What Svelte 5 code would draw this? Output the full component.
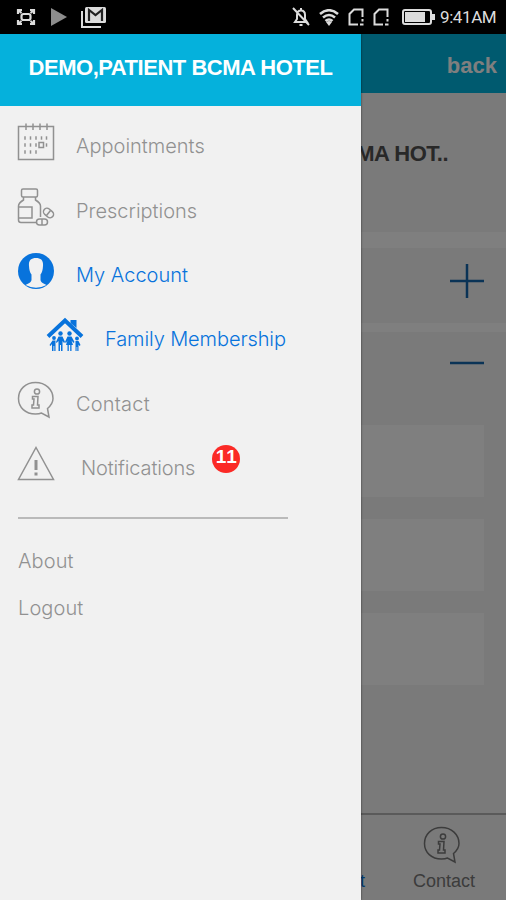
<script lang="ts">
  const patient = "DEMO,PATIENT BCMA HOTEL";
  const unread = 11;

  const items = [
    { id: "appointments", label: "Appointments" },
    { id: "prescriptions", label: "Prescriptions" },
    { id: "account", label: "My Account", active: true },
    { id: "family", label: "Family Membership", active: true, child: true },
    { id: "contact", label: "Contact" },
    { id: "notifications", label: "Notifications", count: unread },
  ];

  const calendarDots = [
    [8, 15], [13.5, 15], [19, 15], [24.5, 15], [29.5, 15],
    [8, 22], [13.5, 22], [19, 22], [29.5, 22],
    [8, 29], [13.5, 29], [19, 29],
  ];
</script>

{#snippet bubble()}
  <path d="M30.5 27.5C34 24.5 36 21 36 17.5C36 8.5 28.5 1.5 18.500 1.500S1.500 8.500 1.500 17.500S8.500 33 18.500 33C21 33 23 32.700 24.500 32L32 36Z" />
  <circle cx="20" cy="10.500" r="2.600" />
  <path d="M15.500 15.500H21L20.500 24H22V27H15V24H16.500L17 18H15.500Z" />
{/snippet}

{#snippet sim()}
  <path d="M10 16.500H1.500V6L6 1.500H14.500V9M14.500 11V13.500M12 16.500H15.500" />
{/snippet}

<div class="phone">
  <div class="status">
    <svg class="capture" viewBox="0 0 20 18">
      <path d="M2 6V2H6M14 2H18V6M18 12V16H14M6 16H2V12M2 2L5.500 5M18 2L14.500 5M18 16L14.500 13M2 16L5.500 13" />
      <rect x="5.500" y="6" width="9" height="6" rx="2" />
    </svg>
    <svg class="play" viewBox="0 0 16 18">
      <path d="M0 0L16 9L0 18Z" />
    </svg>
    <svg class="mail" viewBox="0 0 26 22">
      <path class="back-card" d="M1 5V21H20" />
      <rect x="4" y="1" width="21" height="16" rx="1.500" />
      <path class="letter" d="M8 15V4L14.500 9L21 4V15" />
    </svg>
    <span class="spacer"></span>
    <svg class="bell" viewBox="0 0 18 20">
      <path d="M3 15H15L13 12V8C13 5 11.500 3.500 9 3.500S5 5 5 8V12ZM9 1V3M7.500 18H10.500M1 1L17 18" />
    </svg>
    <svg class="wifi" viewBox="0 0 20 17">
      <path d="M1 5Q10 -2.500 19 5M4 8.500Q10 3.500 16 8.500M6.500 12Q10 9 13.500 12" />
      <path class="tip" d="M7 13Q10 11 13 13L10 17Z" />
    </svg>
    <svg class="sim" viewBox="0 0 16 18">{@render sim()}</svg>
    <svg class="sim second" viewBox="0 0 16 18">{@render sim()}</svg>
    <svg class="battery" viewBox="0 0 34 16">
      <rect class="shell" x="1" y="1" width="28" height="14" rx="2" />
      <rect x="3" y="3" width="20" height="10" />
      <path d="M30 5H33V11H30Z" />
    </svg>
    <span class="clock">9:41AM</span>
  </div>

  <div class="screen">
    <div class="page">
      <header class="topbar">back</header>
      <section class="name">BCMA HOT..</section>
      <section class="row">
        <svg viewBox="0 0 34 34"><path d="M0 17H34M17 0V34" /></svg>
      </section>
      <section class="details">
        <svg viewBox="0 0 34 34"><path d="M0 15H34" /></svg>
        <div class="field"></div>
        <div class="field"></div>
        <div class="field"></div>
      </section>
      <nav class="tabs">
        <div class="tab active">Account</div>
        <div class="tab">
          <svg viewBox="0 0 38 38">{@render bubble()}</svg>
          Contact
        </div>
      </nav>
    </div>

    <div class="shade"></div>

    <aside class="drawer">
      <h1>{patient}</h1>
      <ul>
        {#each items as item (item.id)}
          <li class={item.id} class:active={item.active} class:child={item.child}>
            <svg viewBox="0 0 38 38">
              {#if item.id === "appointments"}
                <path d="M1.500 3.500H36.500V36.500H1.500ZM9 .5V7M16 .5V7M23 .5V7M30 .5V7" />
                {#each calendarDots as [x, y]}
                  <path class="dot" d="M{x} {y - 1.700}V{y + 1.700}" />
                {/each}
                <rect x="22" y="19.500" width="4.500" height="5" />
              {:else if item.id === "prescriptions"}
                <rect x="4.500" y="1" width="16" height="8" rx="1.500" />
                <path d="M6.500 9V12Q1.500 15 1.500 18V32Q1.500 34.500 4 34.500H19M18.500 9V12Q23.500 15 23.500 18V29M1.500 19H15V30H1.500" />
                <rect x="19.500" y="31" width="11" height="6" rx="3" />
                <path d="M25 31V37" />
                <rect x="26" y="21.500" width="11" height="7" rx="3.500" transform="rotate(40 31.500 25)" />
                <path d="M33.500 22.500L29.500 27.500" />
              {:else if item.id === "account"}
                <circle class="solid" cx="19" cy="19" r="18" />
                <path class="cut" d="M19 6C14 6 11.500 8.500 12 14C12.200 18 13 20.500 14.500 22.500V28C14 31 11 31.500 8.500 33Q19 38.500 29.500 33C27 31.500 24 31 23.500 28V22.500C25 20.500 25.800 18 26 14C26.500 8.500 24 6 19 6Z" />
              {:else if item.id === "family"}
                <path class="roof" d="M2 20.500L19 4.500L36 20.500" />
                <path class="solid" d="M24.500 4H30.500V12L24.500 7Z" />
                <circle class="solid" cx="14.500" cy="17.500" r="2.200" />
                <circle class="solid" cx="23.500" cy="17.500" r="2.200" />
                <circle class="solid" cx="8" cy="22" r="1.900" />
                <circle class="solid" cx="31" cy="22.500" r="1.900" />
                <path class="solid" d="M12.500 20.500H16.500L19 26L18 27L16.500 25V35H15V29H14V35H12.500V25L10.500 27L10 26Z" />
                <path class="solid" d="M21.500 20.500H25.500L28.500 26L27.500 27L25.500 24.500L27 29H25.500V35H24.200V29H22.800V35H21.500V29H20L21.500 24.500L20 27L19 26Z" />
                <path class="solid" d="M6.500 24.500H9.500V35H8.300V30H7.500V35H6V28L4.500 30L3.500 29Z" />
                <path class="solid" d="M29.500 25H32.500L34.500 29L33.500 30L32.500 28.500V35H31.300V31H30.600V35H29.500Z" />
              {:else if item.id === "contact"}
                {@render bubble()}
              {:else}
                <path d="M19 2.500L36.500 34.500H1.500Z" />
                <path class="mark" d="M19 15V25M19 27.500V30.500" />
              {/if}
            </svg>
            <span class="label">{item.label}</span>
            {#if item.count}
              <span class="badge">{item.count}</span>
            {/if}
          </li>
        {/each}
      </ul>
      <hr />
      <div class="links">
        <a href="#about">About</a>
        <a href="#logout">Logout</a>
      </div>
    </aside>
  </div>
</div>

<style>
  :global(body) {
    background: #000;
  }

  .phone {
    --blue: #0873dc;
    --cyan: #05b1dc;

    width: 506px;
    height: 900px;
    display: flex;
    flex-direction: column;
    overflow: hidden;
    font-family: "Liberation Sans", Arial, sans-serif;
  }

  svg {
    display: block;
    flex: none;
    fill: none;
    stroke: currentColor;
  }

  .status {
    height: 34px;
    box-sizing: border-box;
    flex: none;
    display: flex;
    align-items: center;
    padding: 0 8px 0 16px;
    background: #000;
    color: #dcdcdc;
  }

  .capture {
    width: 20px;
    height: 18px;
    stroke-width: 2.2;
  }

  .play {
    width: 16px;
    height: 18px;
    margin-left: 15px;
    fill: #8d8d8d;
    stroke: none;
  }

  .mail {
    width: 26px;
    height: 22px;
    margin-left: 14px;
    fill: currentColor;
    stroke: none;
  }

  .mail .back-card {
    fill: none;
    stroke: currentColor;
    stroke-width: 2;
  }

  .mail .letter {
    fill: none;
    stroke: #222;
    stroke-width: 2.2;
  }

  .spacer {
    flex: 1;
  }

  .bell {
    width: 18px;
    height: 20px;
    stroke-width: 2;
  }

  .wifi {
    width: 20px;
    height: 17px;
    margin-left: 9px;
    stroke-width: 2.6;
  }

  .wifi .tip,
  .battery {
    fill: currentColor;
    stroke: none;
  }

  .sim {
    width: 16px;
    height: 18px;
    margin-left: 9px;
    stroke-width: 2;
  }

  .sim.second {
    margin-left: 9px;
  }

  .battery {
    width: 34px;
    height: 16px;
    margin-left: 13px;
  }

  .battery .shell {
    fill: none;
    stroke: currentColor;
    stroke-width: 2;
  }

  .clock {
    width: 58px;
    margin-left: 4px;
    font: 17px/36px Roboto, sans-serif;
    letter-spacing: -0.4px;
    white-space: nowrap;
  }

  .screen {
    position: relative;
    flex: 1;
    min-height: 0;
  }

  .page {
    height: 100%;
    display: flex;
    flex-direction: column;
    background: #fff;
  }

  .topbar {
    height: 59px;
    box-sizing: border-box;
    padding-right: 9px;
    background: #00b4de;
    color: #fff;
    font-size: 22px;
    font-weight: 700;
    line-height: 64px;
    text-align: right;
  }

  .name {
    height: 139px;
    box-sizing: border-box;
    padding: 0 58px 18px 0;
    background: #f4f4f4;
    color: #505050;
    font-size: 22px;
    font-weight: 700;
    letter-spacing: -0.5px;
    line-height: 121px;
    text-align: right;
    white-space: nowrap;
  }

  .row,
  .details {
    display: flex;
    flex-direction: column;
    align-items: flex-end;
    padding-right: 22px;
    background: #f4f4f4;
    color: #1566ac;
  }

  .row {
    height: 75px;
    margin-top: 16px;
    justify-content: center;
  }

  .row svg,
  .details svg {
    width: 34px;
    height: 34px;
    stroke-width: 2.5;
  }

  .row svg {
    margin-bottom: 10px;
  }

  .details {
    flex: 1;
    margin-top: 9px;
    padding-top: 16px;
    gap: 22px;
  }

  .details svg {
    margin-bottom: 21px;
  }

  .field {
    width: 440px;
    height: 72px;
    background: #fff;
  }

  .tabs {
    height: 87px;
    box-sizing: border-box;
    flex: none;
    display: flex;
    justify-content: flex-end;
    border-top: 2px solid #b4b4b4;
    background: #f4f4f4;
    font-size: 18px;
  }

  .tab {
    width: 124px;
    display: flex;
    flex-direction: column;
    align-items: center;
    justify-content: flex-end;
    gap: 7px;
    padding-bottom: 9px;
    color: #787878;
    line-height: 20px;
  }

  .tab svg {
    width: 38px;
    height: 38px;
    margin-right: 5px;
    stroke-width: 1.5;
  }

  .tab.active {
    color: var(--blue);
    align-items: flex-end;
    padding-right: 17px;
  }

  .shade {
    position: absolute;
    inset: 0;
    background: rgba(0, 0, 0, 0.5);
  }

  .drawer {
    position: absolute;
    top: 0;
    bottom: 0;
    left: 0;
    width: 361px;
    background: #f1f1f1;
    box-shadow: 0 0 2px rgba(0, 0, 0, 0.6);
    color: #919191;
    font-family: Inter, "Liberation Sans", sans-serif;
    font-size: 20px;
    font-weight: 300;
  }

  h1 {
    height: 72px;
    margin: 0;
    background: var(--cyan);
    color: #fff;
    font: 700 22px/68px "Liberation Sans", Arial, sans-serif;
    letter-spacing: -0.48px;
    text-align: center;
    white-space: nowrap;
  }

  ul {
    margin: 0;
    padding: 4px 0 0 17px;
    list-style: none;
  }

  li {
    height: 64.4px;
    display: flex;
    align-items: center;
    gap: 21px;
  }

  li svg {
    width: 38px;
    height: 38px;
    stroke-width: 1.5;
  }

  .label {
    padding-top: 8px;
    white-space: nowrap;
  }

  .active {
    color: var(--blue);
  }

  .child {
    padding-left: 29px;
    letter-spacing: -0.1px;
  }

  .notifications .label {
    padding-left: 5px;
    letter-spacing: -0.15px;
  }

  .contact .label {
    letter-spacing: 0.2px;
  }

  .dot {
    stroke-width: 1.5;
  }

  .solid {
    fill: currentColor;
    stroke: none;
  }

  .cut {
    fill: #f1f1f1;
    stroke: none;
  }

  .roof {
    stroke-width: 4;
  }

  .mark {
    stroke-width: 3;
  }

  .badge {
    width: 28px;
    height: 28px;
    margin: -10px 0 0 -4px;
    border-radius: 50%;
    background: #fb2a26;
    color: #fff;
    font: 700 19px/23px "Liberation Sans", Arial, sans-serif;
    font-kerning: none;
    text-align: center;
  }

  hr {
    width: 270px;
    height: 2px;
    margin: 21px 0 0 18px;
    border: 0;
    background: #bababa;
  }

  .links {
    display: flex;
    flex-direction: column;
    padding: 19px 18px;
  }

  .links a {
    color: inherit;
    line-height: 46.5px;
    text-decoration: none;
    letter-spacing: 0.1px;
  }
</style>
